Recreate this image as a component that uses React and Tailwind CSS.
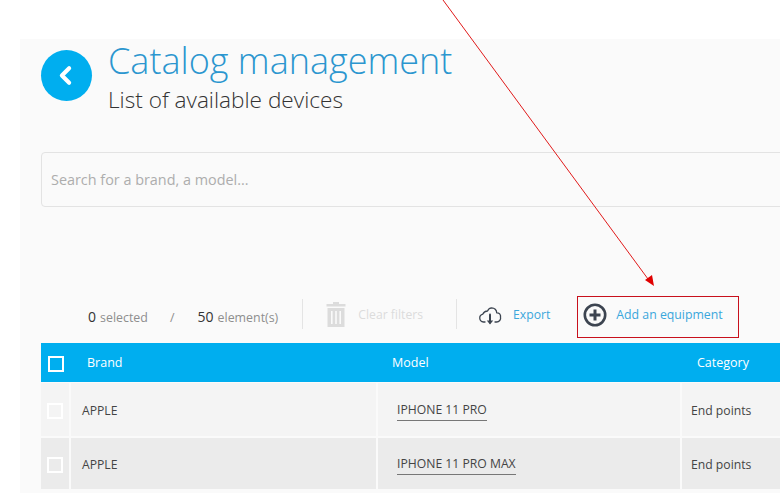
import React from "react";
import { ChevronLeft } from "lucide-react";

const font = { fontFamily: '"Open Sans", sans-serif' };

const rows = [
  { brand: "APPLE", model: "IPHONE 11 PRO", category: "End points", cell: "bg-[#f4f4f4] pt-[3px]", h: "h-[53px]" },
  { brand: "APPLE", model: "IPHONE 11 PRO MAX", category: "End points", cell: "bg-[#ebebeb] pt-[3px]", h: "h-[51px]" },
];

const TrashIcon = () => (
  <svg viewBox="0 0 20 25" className="w-[20px] h-[25px] mt-[1px]" fill="#dcdcdc">
    <path d="M7 0h6v2h6.5v2.5H.5V2H7z" />
    <path fillRule="evenodd" d="M1.5 6h17v19h-17zM5 9v13h1.6V9zM9.2 9v13h1.6V9zM13.4 9v13H15V9z" />
  </svg>
);

const CloudIcon = () => (
  <svg viewBox="0 0 24 20" className="w-[24px] h-[20px] mt-[5px]" fill="none" stroke="#3c4450" strokeWidth="1.3" strokeLinecap="round" strokeLinejoin="round">
    <path d="M7 16H5.5a4 4 0 0 1-.6-7.9A5 5 0 0 1 9.5 5a5 5 0 0 1 4.2-3.2 5 5 0 0 1 5 5 3.5 3.5 0 0 1 3.8 4.2 4 4 0 0 1-4 5H17" />
    <path d="M12 8.5v8" strokeWidth="2" />
    <path d="M8.8 14.5h6.4L12 18.5z" fill="#3c4450" stroke="none" />
  </svg>
);

const PlusCircle = () => (
  <svg viewBox="0 0 24 24" className="w-[24px] h-[24px] mt-[3px]" fill="none" stroke="#3c4450">
    <circle cx="12" cy="12" r="10.2" strokeWidth="2.6" />
    <path d="M12 6.5v11M6.5 12h11" strokeWidth="3" />
  </svg>
);

// Red annotation drawn over the screenshot
const Annotation = () => (
  <svg className="absolute inset-0 w-[780px] h-[493px] pointer-events-none" viewBox="0 0 780 493" fill="none">
    <path d="M443 0L648 279" stroke="#e01a1a" strokeWidth="1" />
    <path d="M654 286L645 280L652 275z" fill="#e00000" />
    <rect x="577.5" y="296.5" width="161" height="41" stroke="#c8101c" strokeWidth="1" />
  </svg>
);

export default function App() {
  return (
    <div className="relative w-[780px] h-[493px] overflow-hidden bg-white pt-[39px] pl-[20px]" style={font}>
      <div className="h-[454px] bg-[#fafafa] pl-[21px]">
        {/* Header */}
        <div className="flex items-start gap-[16px] pt-[11px] h-[113px]">
          <div className="w-[51px] h-[51px] rounded-full bg-[#00aeef] flex items-center justify-center shrink-0">
            <ChevronLeft className="w-[29px] h-[29px] text-white mr-[2px]" strokeWidth={3.4} />
          </div>
          <div className="-mt-[12px]">
            <div className="text-[36px] leading-[46px] font-light text-[#2b96cf] whitespace-nowrap">Catalog management</div>
            <div className="text-[22.6px] leading-[30px] font-light text-[#333] whitespace-nowrap mt-[1px]">List of available devices</div>
          </div>
        </div>

        {/* Search */}
        <div className="h-[55px] w-[760px] border border-[#e3e3e3] rounded-[4px] flex items-center pl-[9px] text-[14.4px] text-[#adadad]">
          Search for a brand, a model...
        </div>

        {/* Toolbar */}
        <div className="h-[136px] flex items-end pb-[12px] whitespace-nowrap">
          <div className="flex items-center h-[32px] pl-[47px]">
            <div className="flex items-baseline pt-[3px]">
              <span className="text-[14px] text-[#333]">0</span>
              <span className="text-[12.4px] text-[#8e8e8e] ml-[4px] w-[70px]">selected</span>
              <span className="text-[12.4px] text-[#8e8e8e]">/</span>
              <span className="text-[14px] text-[#333] ml-[23px]">50</span>
              <span className="text-[12.4px] text-[#8e8e8e] ml-[4px]">element(s)</span>
            </div>
            <div className="w-px h-[30px] bg-[#e4e4e4] ml-[24px] -mt-[3px]" />
            <div className="flex items-center gap-[12px] ml-[23px] -mt-[3px]">
              <TrashIcon />
              <span className="text-[12.2px] text-[#dcdcdc] mt-[4px]">Clear filters</span>
            </div>
            <div className="w-px h-[30px] bg-[#e4e4e4] ml-[33px] -mt-[3px]" />
            <div className="flex items-center ml-[21px] -mt-[3px]">
              <CloudIcon />
              <span className="text-[12.2px] text-[#3ba7dc] mt-[4px] ml-[11px]">Export</span>
            </div>
            <div className="flex items-center gap-[9px] ml-[33px] -mt-[3px]">
              <PlusCircle />
              <span className="text-[12.3px] text-[#3ba7dc] mt-[4px]">Add an equipment</span>
            </div>
          </div>
        </div>

        {/* Table */}
        <div className="w-[739px] grid grid-cols-[334px_305px_100px] h-[39px] bg-[#00aeef] text-white text-[12.5px] items-center">
          <div className="flex items-center pl-[7px]">
            <div className="w-[16px] h-[16px] border-2 border-white mt-[3px]" />
            <span className="ml-[23px] mt-[1px]">Brand</span>
          </div>
          <div className="pl-[17px] mt-[1px]">Model</div>
          <div className="pl-[17px] mt-[1px]">Category</div>
        </div>
        <div className="flex flex-col gap-[2px] mt-[1px]">
          {rows.map((r) => (
            <div key={r.model} className={`w-[739px] grid grid-cols-[28px_305px_302px_100px] gap-x-[2px] ${r.h} text-[12.2px] text-[#444]`}>
              <div className={`${r.cell} flex items-center justify-center`}>
                <div className="w-[16px] h-[16px] border-2 border-white" />
              </div>
              <div className={`${r.cell} flex items-center pl-[11px]`}>{r.brand}</div>
              <div className={`${r.cell} flex items-center pl-[19px]`}>
                <span className="border-b border-[#777] pb-[1px] leading-[18px]">{r.model}</span>
              </div>
              <div className={`${r.cell} flex items-center pl-[9px]`}>{r.category}</div>
            </div>
          ))}
        </div>
      </div>
      <Annotation />
    </div>
  );
}
